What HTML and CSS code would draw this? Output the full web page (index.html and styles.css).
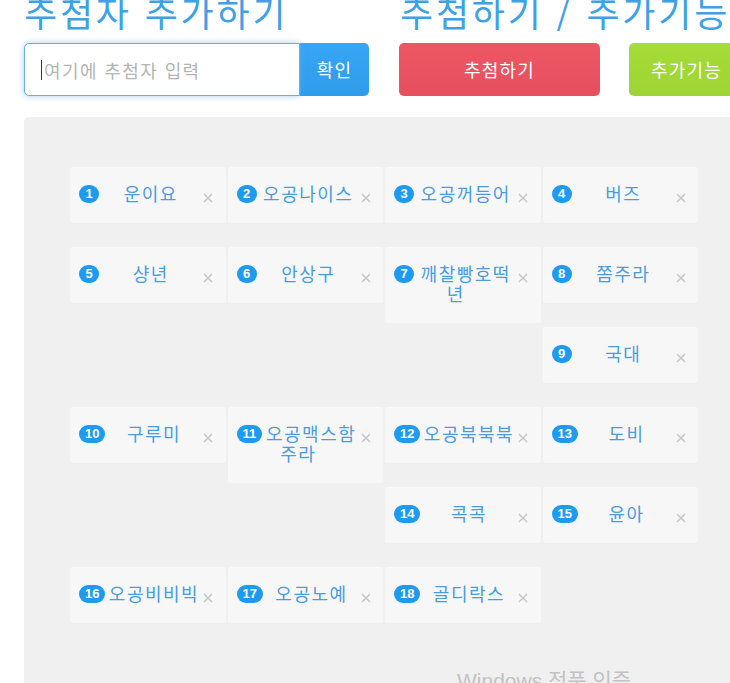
FILE: index.html
```html
<!DOCTYPE html>
<html lang="ko">
<head>
<meta charset="utf-8">
<title>추첨기</title>
<link rel="stylesheet" href="styles.css">
</head>
<body>
<div class="page">
  <header class="top">
    <section class="panel panel-add">
      <h1 class="title">추첨자 추가하기</h1>
      <form class="add-form">
        <div class="input-wrap">
          <input class="name-input" type="text" placeholder="여기에 추첨자 입력">
          <span class="caret"></span>
        </div>
        <button type="button" class="btn btn-ok">확인</button>
      </form>
    </section>
    <section class="panel panel-draw">
      <h1 class="title">추첨하기 / 추가기능</h1>
      <div class="actions">
        <button type="button" class="btn btn-draw">추첨하기</button>
        <button type="button" class="btn btn-extra">추가기능</button>
      </div>
    </section>
  </header>

  <main class="board">
    <ul class="entries">
      <li class="entry"><span class="num">1</span><span class="name">운이요</span><span class="del"><svg viewBox="0 0 10 10"><path d="M1 1L9 9M9 1L1 9"/></svg></span></li>
      <li class="entry"><span class="num">2</span><span class="name">오공나이스</span><span class="del"><svg viewBox="0 0 10 10"><path d="M1 1L9 9M9 1L1 9"/></svg></span></li>
      <li class="entry"><span class="num">3</span><span class="name">오공꺼등어</span><span class="del"><svg viewBox="0 0 10 10"><path d="M1 1L9 9M9 1L1 9"/></svg></span></li>
      <li class="entry"><span class="num">4</span><span class="name">버즈</span><span class="del"><svg viewBox="0 0 10 10"><path d="M1 1L9 9M9 1L1 9"/></svg></span></li>
      <li class="entry"><span class="num">5</span><span class="name">샹년</span><span class="del"><svg viewBox="0 0 10 10"><path d="M1 1L9 9M9 1L1 9"/></svg></span></li>
      <li class="entry"><span class="num">6</span><span class="name">안상구</span><span class="del"><svg viewBox="0 0 10 10"><path d="M1 1L9 9M9 1L1 9"/></svg></span></li>
      <li class="entry"><span class="num">7</span><span class="name">깨찰빵호떡년</span><span class="del"><svg viewBox="0 0 10 10"><path d="M1 1L9 9M9 1L1 9"/></svg></span></li>
      <li class="entry"><span class="num">8</span><span class="name">쫌주라</span><span class="del"><svg viewBox="0 0 10 10"><path d="M1 1L9 9M9 1L1 9"/></svg></span></li>
      <li class="entry"><span class="num">9</span><span class="name">국대</span><span class="del"><svg viewBox="0 0 10 10"><path d="M1 1L9 9M9 1L1 9"/></svg></span></li>
      <li class="entry"><span class="num">10</span><span class="name">구루미</span><span class="del"><svg viewBox="0 0 10 10"><path d="M1 1L9 9M9 1L1 9"/></svg></span></li>
      <li class="entry"><span class="num">11</span><span class="name">오공맥스함주라</span><span class="del"><svg viewBox="0 0 10 10"><path d="M1 1L9 9M9 1L1 9"/></svg></span></li>
      <li class="entry"><span class="num">12</span><span class="name">오공북북북</span><span class="del"><svg viewBox="0 0 10 10"><path d="M1 1L9 9M9 1L1 9"/></svg></span></li>
      <li class="entry"><span class="num">13</span><span class="name">도비</span><span class="del"><svg viewBox="0 0 10 10"><path d="M1 1L9 9M9 1L1 9"/></svg></span></li>
      <li class="entry"><span class="num">14</span><span class="name">콕콕</span><span class="del"><svg viewBox="0 0 10 10"><path d="M1 1L9 9M9 1L1 9"/></svg></span></li>
      <li class="entry"><span class="num">15</span><span class="name">윤아</span><span class="del"><svg viewBox="0 0 10 10"><path d="M1 1L9 9M9 1L1 9"/></svg></span></li>
      <li class="entry"><span class="num">16</span><span class="name">오공비비빅</span><span class="del"><svg viewBox="0 0 10 10"><path d="M1 1L9 9M9 1L1 9"/></svg></span></li>
      <li class="entry"><span class="num">17</span><span class="name">오공노예</span><span class="del"><svg viewBox="0 0 10 10"><path d="M1 1L9 9M9 1L1 9"/></svg></span></li>
      <li class="entry"><span class="num">18</span><span class="name">골디락스</span><span class="del"><svg viewBox="0 0 10 10"><path d="M1 1L9 9M9 1L1 9"/></svg></span></li>
    </ul>
  </main>

  <div class="activation">Windows 정품 인증</div>
</div>
</body>
</html>
```
FILE: styles.css
```css
html, body {
  margin: 0;
  padding: 0;
  overflow: hidden;
  background: #fff;
}

body {
  font-family: "Noto Sans CJK KR", "Noto Sans", sans-serif;
}

.page {
  width: 800px;
  height: 683px;
  padding-left: 24px;
  overflow: hidden;
  position: relative;
}

/* ---------- header panels ---------- */
.top {
  display: flex;
  align-items: flex-start;
  height: 117px;
}

.panel-add {
  width: 375px;
  flex: none;
}

.panel-draw {
  flex: none;
}

.title {
  margin: -7px 0 0;
  font-size: 36px;
  line-height: 36px;
  font-weight: 400;
  letter-spacing: 2.8px;
  color: #3fa1e4;
  white-space: nowrap;
}

.panel-draw .title {
  margin-left: 1px;
}

.add-form {
  display: flex;
  margin: 14px 0 0;
}

.input-wrap {
  position: relative;
  width: 276px;
  height: 53px;
}

.name-input {
  box-sizing: border-box;
  width: 100%;
  height: 100%;
  margin: 0;
  padding: 0 0 0 19px;
  border: 1px solid #66afe9;
  border-radius: 5px 0 0 5px;
  box-shadow: 0 0 6px rgba(102, 175, 233, 0.6);
  font-family: inherit;
  font-size: 18px;
  letter-spacing: 1.4px;
  color: #555;
  outline: none;
}

.name-input::placeholder {
  color: #b4b4b4;
}

.caret {
  position: absolute;
  left: 17px;
  top: 17px;
  width: 1px;
  height: 20px;
  background: #333;
}

.btn {
  border: 0;
  margin: 0;
  height: 53px;
  color: #fff;
  font-family: inherit;
  font-size: 18px;
  letter-spacing: 1.2px;
  line-height: 53px;
  padding: 0;
  cursor: pointer;
  white-space: nowrap;
}

.btn-ok {
  width: 69px;
  border-radius: 0 5px 5px 0;
  background: linear-gradient(#37a6f5, #2f9beb);
}

.actions {
  display: flex;
  gap: 29px;
  margin-top: 14px;
  margin-left: 0;
}

.btn-draw {
  width: 201px;
  border-radius: 5px;
  background: linear-gradient(#ef5664, #e5505e);
}

.btn-extra {
  padding: 0 22px;
  border-radius: 5px;
  background: linear-gradient(#a6dd37, #9dd334);
}

/* ---------- entry board ---------- */
.board {
  box-sizing: border-box;
  width: 780px;
  height: 600px;
  background: #f0f0f0;
  border-radius: 5px 0 0 0;
  padding: 50px 0 0 46px;
}

.entries {
  list-style: none;
  margin: 0;
  padding: 0;
  width: 632px;
}

.entry {
  float: left;
  position: relative;
  box-sizing: border-box;
  width: 155.5px;
  margin: 0 2px 24px 0;
  padding: 16px 23px 20px 9px;
  background: #f7f7f7;
  border-radius: 3px;
  text-align: center;
  font-size: 18px;
  line-height: 20px;
}

.num {
  float: left;
  box-sizing: border-box;
  min-width: 20px;
  height: 18px;
  margin-top: 2px;
  padding: 0 6px;
  border-radius: 9px;
  background: #1d9af2;
  color: #fff;
  font-family: "Liberation Sans", Arial, sans-serif;
  font-size: 13px;
  font-weight: 700;
  line-height: 18px;
  text-align: center;
}

.name {
  color: #4a9cdf;
  letter-spacing: 1.5px;
}

.del {
  position: absolute;
  left: 133px;
  top: 26px;
  width: 10px;
  height: 10px;
}

.del svg {
  display: block;
  width: 10px;
  height: 10px;
  fill: none;
  stroke: #c6c6c6;
  stroke-width: 1.5;
}

/* ---------- system watermark ---------- */
.activation {
  position: absolute;
  left: 457px;
  top: 664px;
  font-family: "Liberation Sans", "Noto Sans CJK KR", sans-serif;
  font-size: 21px;
  color: #c2c2c2;
  white-space: nowrap;
}
```
